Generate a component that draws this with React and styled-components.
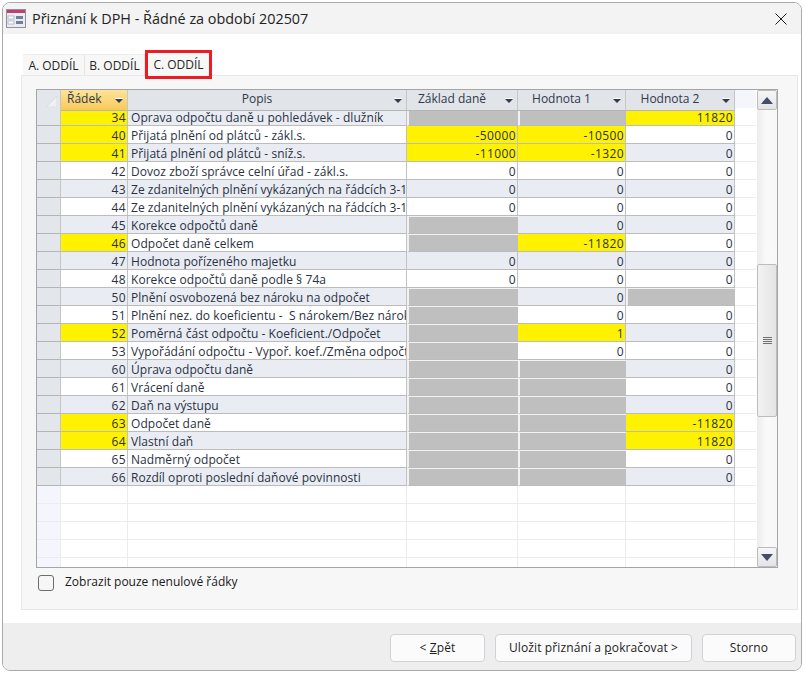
import React from "react"
import styled, { createGlobalStyle } from "styled-components"

const GlobalStyle = createGlobalStyle`
  html, body {
    margin: 0;
    padding: 0;
    background: #ffffff;
  }
  * {
    box-sizing: border-box;
  }
`

const Window = styled.div`
  width: 805px;
  height: 673px;
  padding: 2px;
  font-family: "Open Sans", "DejaVu Sans", sans-serif;
  background: #ffffff;
`

const Frame = styled.div`
  width: 800px;
  height: 669px;
  display: flex;
  flex-direction: column;
  border: 1px solid #a9a9a9;
  border-radius: 8px;
  overflow: hidden;
  background: #ffffff;
`

const TitleBar = styled.div`
  height: 31px;
  flex: none;
  display: flex;
  align-items: center;
  background: #f3f3f3;
  padding: 0 14px 0 3px;
`

const Title = styled.div`
  flex: 1;
  margin-left: 6px;
  font-size: 14.4px;
  color: #222222;
`

const Body = styled.div`
  flex: 1;
  padding: 20px 3px 13px 18px;
  display: flex;
  flex-direction: column;
`

const Tabs = styled.div`
  display: flex;
  align-items: flex-end;
  height: 21px;
  flex: none;
  padding-left: 2px;
`

const Tab = styled.div`
  height: 21px;
  width: ${(p) => p.$width}px;
  display: flex;
  align-items: center;
  justify-content: center;
  font-size: 12px;
  color: #262626;
  background: #f7f7f7;
  border-top: 1px solid #ececec;
  border-right: 1px solid #e6e6e6;
`

const ActiveTab = styled.div`
  height: 29px;
  width: 67px;
  margin-bottom: -4px;
  display: flex;
  align-items: center;
  justify-content: center;
  font-size: 12px;
  color: #262626;
  background: #f7f7f7;
  border: 3px solid #ec1c24;
  position: relative;
  z-index: 1;
`

const Panel = styled.div`
  flex: 1;
  background: #f7f7f7;
  border: 1px solid #e8e8e8;
  padding: 13px 0 0 14px;
`

const Grid = styled.div`
  width: 742px;
  height: 479px;
  display: flex;
  border: 1px solid #a5a5a5;
  background: #ffffff;
`

const Sheet = styled.div`
  width: 719px;
  overflow: hidden;
  flex: none;
`

const Row = styled.div`
  display: grid;
  grid-template-columns: 24px 67px 279px 111px 108px 109px 21px;
  height: 18px;
`

const Corner = styled.div`
  background: #e3e6ea;
  border-right: 1px solid #c6c6c6;
  border-bottom: 1px solid #b5b5b5;
  display: flex;
  align-items: flex-end;
  justify-content: flex-end;
  padding: 0 3px 3px 0;
`

const HeadCell = styled.div`
  position: relative;
  display: flex;
  align-items: center;
  justify-content: ${(p) => (p.$left ? "flex-start" : "center")};
  padding: ${(p) => (p.$left ? "0 0 3px 6px" : "0 20px 3px 0")};
  font-size: 12px;
  color: #2f3a4a;
  background: ${(p) =>
    p.$active ? "linear-gradient(#fbe49a, #f9c95a)" : "#e1e4e9"};
  border-right: 1px solid #c6c6c6;
  border-bottom: 1px solid #b5b5b5;
`

const Arrow = styled.span`
  position: absolute;
  right: 4px;
  top: 9px;
  width: 0;
  height: 0;
  border-left: 4px solid transparent;
  border-right: 4px solid transparent;
  border-top: 4px solid #333b4d;
  &::after {
    content: "";
    position: absolute;
    left: -4px;
    top: -5px;
    width: 8px;
    height: 1px;
    background: #ffffff;
  }
`

const HeadFill = styled.div`
  background: #f4f6fc;
  border-bottom: 1px solid #ececec;
`

const Selector = styled.div`
  background: ${(p) => (p.$empty ? "#f5f6fd" : "#e3e6ea")};
  border-right: 1px solid ${(p) => (p.$empty ? "#ececec" : "#c6c6c6")};
  border-bottom: 1px solid ${(p) => (p.$empty ? "#ececec" : "#b5b5b5")};
`

const Cell = styled.div`
  font-size: 12px;
  letter-spacing: ${(p) => (p.$text ? "0.05px" : "0.4px")};
  line-height: 19px;
  white-space: pre;
  overflow: hidden;
  color: #2a3142;
  padding: ${(p) => (p.$text ? "0 0 0 3px" : "0 1px 0 0")};
  text-align: ${(p) => (p.$text ? "left" : "right")};
  background: ${(p) =>
    p.$kind === "y" ? "#fff200" : p.$alt ? "#e9edf3" : "#ffffff"};
  border-right: 1px solid #c2c2c2;
  border-bottom: 1px solid #bcbcbc;
`

// disabled cell: the grey sits inset from the cell's top and left edge
const GreyCell = styled.div`
  background: #bfbfbf;
  border-top: 1px solid #f2f2f2;
  border-left: 2px solid #f2f2f2;
  border-bottom: 1px solid #bcbcbc;
`

const Filler = styled.div`
  background: #ffffff;
  border-bottom: 1px solid #ececec;
`

const BlankCell = styled.div`
  background: #ffffff;
  border-right: 1px solid #ececec;
  border-bottom: 1px solid #ececec;
`

const Scrollbar = styled.div`
  flex: 1;
  margin-left: 1px;
  display: flex;
  flex-direction: column;
  background: linear-gradient(90deg, #ececec, #fafafa 45%, #f7f7f7);
`

const ScrollButton = styled.div`
  height: 20px;
  flex: none;
  display: flex;
  align-items: center;
  justify-content: center;
  background: linear-gradient(#f6f6f6, #e2e4e8);
  border: 1px solid #bcbcbc;
  border-radius: 2px;
`

const ScrollTrack = styled.div`
  flex: 1;
  padding-top: 154px;
`

const Thumb = styled.div`
  height: 153px;
  display: flex;
  align-items: center;
  justify-content: center;
  background: linear-gradient(90deg, #f2f2f2, #e4e4e4);
  border: 1px solid #bdbdbd;
  border-radius: 2px;
`

const Option = styled.div`
  display: flex;
  align-items: center;
  margin-top: 3px;
  height: 20px;
`

const Checkbox = styled.div`
  width: 16px;
  height: 16px;
  margin-left: 2px;
  margin-top: 3px;
  border: 1px solid #6d6d6d;
  border-radius: 3px;
  background: #f6f6f6;
`

const OptionLabel = styled.div`
  margin-left: 11px;
  font-size: 12px;
  color: #1a1a1a;
`

const Footer = styled.div`
  height: 47px;
  flex: none;
  background: #eeeeee;
  display: flex;
  justify-content: flex-end;
  align-items: flex-start;
  gap: 10px;
  padding: 11px 5px 0 0;
`

const Button = styled.div`
  width: ${(p) => p.$width}px;
  height: 28px;
  display: flex;
  align-items: center;
  justify-content: center;
  padding-bottom: 2px;
  background: #fbfbfb;
  border: 1px solid #cfd3d8;
  border-radius: 4px;
  font-size: 12px;
  letter-spacing: 0.12px;
  color: #1c1c1c;
  white-space: pre;
`

const Mnemonic = styled.span`
  text-decoration: underline;
`

// [cislo radku, popis, zaklad, hodnota 1, hodnota 2, barva radku]
const rows = [
  ["34", "Oprava odpočtu daně u pohledávek - dlužník", "g", "g", "y:11820", "y"],
  ["40", "Přijatá plnění od plátců - zákl.s.", "y:-50000", "y:-10500", "0", "y"],
  ["41", "Přijatá plnění od plátců - sníž.s.", "y:-11000", "y:-1320", "0", "y"],
  ["42", "Dovoz zboží správce celní úřad - zákl.s.", "0", "0", "0", ""],
  ["43", "Ze zdanitelných plnění vykázaných na řádcích 3-13", "0", "0", "0", ""],
  ["44", "Ze zdanitelných plnění vykázaných na řádcích 3-13", "0", "0", "0", ""],
  ["45", "Korekce odpočtů daně", "g", "0", "0", ""],
  ["46", "Odpočet daně celkem", "g", "y:-11820", "0", "y"],
  ["47", "Hodnota pořízeného majetku", "0", "0", "0", ""],
  ["48", "Korekce odpočtů daně podle § 74a", "0", "0", "0", ""],
  ["50", "Plnění osvobozená bez nároku na odpočet", "g", "0", "g", ""],
  ["51", "Plnění nez. do koeficientu -  S nárokem/Bez nároku", "g", "0", "0", ""],
  ["52", "Poměrná část odpočtu - Koeficient./Odpočet", "g", "y:1", "0", "y"],
  ["53", "Vypořádání odpočtu - Vypoř. koef./Změna odpočtu", "g", "0", "0", ""],
  ["60", "Úprava odpočtu daně", "g", "g", "0", ""],
  ["61", "Vrácení daně", "g", "g", "0", ""],
  ["62", "Daň na výstupu", "g", "g", "0", ""],
  ["63", "Odpočet daně", "g", "g", "y:-11820", "y"],
  ["64", "Vlastní daň", "g", "g", "y:11820", "y"],
  ["65", "Nadměrný odpočet", "g", "g", "0", ""],
  ["66", "Rozdíl oproti poslední daňové povinnosti", "g", "g", "0", ""],
]

function ValueCell({ value, alt }) {
  if (value === "g") return <GreyCell />
  if (value.startsWith("y:")) {
    return <Cell $kind="y">{value.slice(2)}</Cell>
  }
  return <Cell $alt={alt}>{value}</Cell>
}

function FormIcon() {
  return (
    <svg width="20" height="20" viewBox="0 0 20 20">
      <rect x="0.5" y="0.5" width="19" height="18" fill="#e8edf3" stroke="#9a8aa0" />
      <rect x="1" y="1" width="18" height="3" fill="#c0406c" />
      <rect x="2" y="7" width="6" height="3" fill="#ffffff" stroke="#8c9bb0" strokeWidth="0.6" />
      <rect x="2" y="12" width="6" height="3" fill="#ffffff" stroke="#8c9bb0" strokeWidth="0.6" />
      <rect x="10" y="7" width="7" height="3" fill="#6f7f96" />
      <rect x="10" y="12" width="7" height="3" fill="#6f7f96" />
    </svg>
  )
}

function CloseIcon() {
  return (
    <svg width="12" height="12" viewBox="0 0 12 12">
      <path d="M0.5 0.5L11.5 11.5M11.5 0.5L0.5 11.5" stroke="#1c1c1c" strokeWidth="1" fill="none" />
    </svg>
  )
}

function ScrollArrow({ down }) {
  return (
    <svg width="12" height="7" viewBox="0 0 12 7">
      <path d={down ? "M0 0H12L6 7Z" : "M6 0L12 7H0Z"} fill="#444d68" />
    </svg>
  )
}

function Grip() {
  return (
    <svg width="9" height="8" viewBox="0 0 9 8">
      <path d="M0 .5H9M0 2.5H9M0 4.5H9M0 6.5H9" stroke="#707070" strokeWidth="1" />
    </svg>
  )
}

const App = () => {
  return (
    <Window>
      <GlobalStyle />
      <Frame>
        <TitleBar>
          <FormIcon />
          <Title>Přiznání k DPH - Řádné za období 202507</Title>
          <CloseIcon />
        </TitleBar>
        <Body>
          <Tabs>
            <Tab $width={62}>A. ODDÍL</Tab>
            <Tab $width={60}>B. ODDÍL</Tab>
            <ActiveTab>C. ODDÍL</ActiveTab>
          </Tabs>
          <Panel>
            <Grid>
              <Sheet>
                <Row>
                  <Corner>
                    <svg width="11" height="11" viewBox="0 0 11 11">
                      <path d="M11 0V11H0Z" fill="#eef0f3" stroke="#d0d3d8" strokeWidth="0.6" />
                    </svg>
                  </Corner>
                  <HeadCell $active $left>
                    Řádek
                    <Arrow />
                  </HeadCell>
                  <HeadCell>
                    Popis
                    <Arrow />
                  </HeadCell>
                  <HeadCell>
                    Základ daně
                    <Arrow />
                  </HeadCell>
                  <HeadCell>
                    Hodnota 1
                    <Arrow />
                  </HeadCell>
                  <HeadCell>
                    Hodnota 2
                    <Arrow />
                  </HeadCell>
                  <HeadFill />
                </Row>
                {rows.map((r, i) => {
                  const alt = i % 2 === 0
                  return (
                    <Row key={r[0]}>
                      <Selector />
                      <Cell $kind={r[5]} $alt={alt}>
                        {r[0]}
                      </Cell>
                      <Cell $text $alt={alt}>
                        {r[1]}
                      </Cell>
                      <ValueCell value={r[2]} alt={alt} />
                      <ValueCell value={r[3]} alt={alt} />
                      <ValueCell value={r[4]} alt={alt} />
                      <Filler />
                    </Row>
                  )
                })}
                {[0, 1, 2, 3, 4].map((n) => (
                  <Row key={n}>
                    <Selector $empty />
                    <BlankCell />
                    <BlankCell />
                    <BlankCell />
                    <BlankCell />
                    <BlankCell />
                    <Filler />
                  </Row>
                ))}
              </Sheet>
              <Scrollbar>
                <ScrollButton>
                  <ScrollArrow />
                </ScrollButton>
                <ScrollTrack>
                  <Thumb>
                    <Grip />
                  </Thumb>
                </ScrollTrack>
                <ScrollButton>
                  <ScrollArrow down />
                </ScrollButton>
              </Scrollbar>
            </Grid>
            <Option>
              <Checkbox />
              <OptionLabel>Zobrazit pouze nenulové řádky</OptionLabel>
            </Option>
          </Panel>
        </Body>
        <Footer>
          <Button $width={95}>
            {"< "}
            <Mnemonic>Z</Mnemonic>pět
          </Button>
          <Button $width={197}>
            {"Uložit přiznání a "}
            <Mnemonic>p</Mnemonic>
            {"okračovat >"}
          </Button>
          <Button $width={94}>Storno</Button>
        </Footer>
      </Frame>
    </Window>
  )
}

export default App
